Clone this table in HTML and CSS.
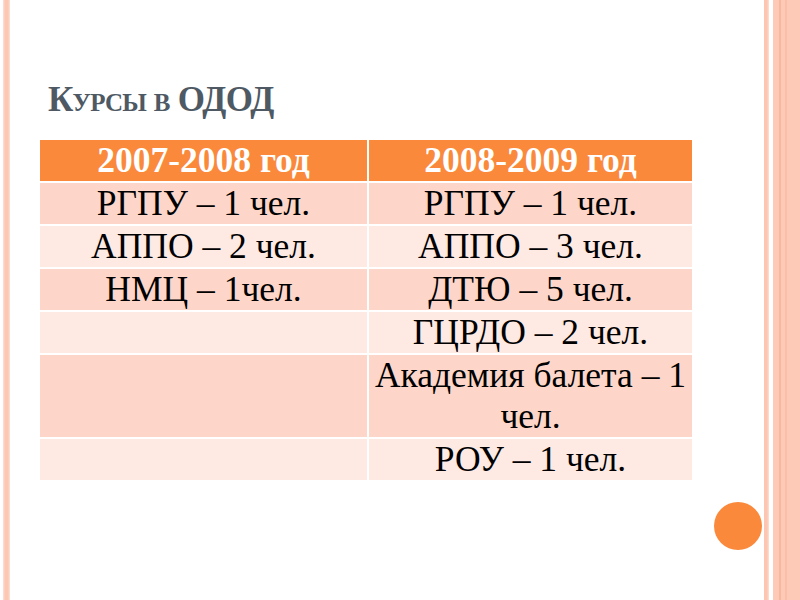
FILE: index.html
```html
<!DOCTYPE html>
<html lang="ru">
<head>
    <meta charset="UTF-8">
    <title>Курсы в ОДОД</title>
    <link rel="stylesheet" href="styles.css">
</head>
<body>
    <div class="frame-left"></div>
    <div class="slide">
        <h1 class="title">Курсы в ОДОД</h1>
        <table class="courses">
            <tr class="head">
                <th class="col-a">2007-2008 год</th>
                <th class="col-b">2008-2009 год</th>
            </tr>
            <tr class="dark">
                <td>РГПУ – 1 чел.</td>
                <td>РГПУ – 1 чел.</td>
            </tr>
            <tr class="light">
                <td>АППО – 2 чел.</td>
                <td>АППО – 3 чел.</td>
            </tr>
            <tr class="dark">
                <td>НМЦ – 1чел.</td>
                <td>ДТЮ – 5 чел.</td>
            </tr>
            <tr class="light">
                <td></td>
                <td>ГЦРДО – 2 чел.</td>
            </tr>
            <tr class="dark">
                <td></td>
                <td>Академия балета – 1 чел.</td>
            </tr>
            <tr class="light">
                <td></td>
                <td>РОУ – 1 чел.</td>
            </tr>
        </table>
        <div class="footer">
            <span class="dot"></span>
        </div>
    </div>
    <div class="frame-right">
        <div class="rule"></div>
        <div class="gap"></div>
        <div class="band"></div>
    </div>
</body>
</html>
```

FILE: styles.css
```css
body {
    margin: 0;
    width: 800px;
    height: 600px;
    display: flex;
    background-color: #fff;
    font-family: "Liberation Serif", "Times New Roman", serif;
    overflow: hidden;
}
.frame-left {
    width: 7px;
    margin-left: 3px;
    background: linear-gradient(to right, #fde3d8, #fcc7b3 30%, #fcc7b3 70%, #fde3d8);
}
.slide {
    flex: 1;
    display: flex;
    flex-direction: column;
}
.title {
    margin: 80px 0 0 38px;
    font-size: 35px;
    line-height: 40px;
    letter-spacing: -0.8px;
    font-weight: bold;
    font-variant: small-caps;
    color: #4e5964;
}
.courses {
    margin: 18px 0 0 28px;
    width: 656px;
    border-collapse: separate;
    border-spacing: 2px;
    font-size: 35.5px;
    line-height: 41px;
    color: #000;
}
.courses th,
.courses td {
    padding: 0 2px;
    text-align: center;
    vertical-align: middle;
    height: 41px;
}
.col-a {
    width: 323px;
}
.head th {
    background-color: #fa893c;
    color: #fff;
    font-weight: bold;
}
.dark td {
    background-color: #fdd6c9;
}
.light td {
    background-color: #fee9e3;
}
.footer {
    display: flex;
    justify-content: flex-end;
    margin-top: 20px;
    padding-right: 2px;
}
.dot {
    width: 48px;
    height: 48px;
    border-radius: 50%;
    background-color: #fa893c;
}
.frame-right {
    display: flex;
    width: 36px;
}
.rule {
    width: 5px;
    background: linear-gradient(to right, #fcc6b2, #fcc6b2 60%, #fde0d5);
}
.gap {
    width: 4px;
    background-color: #fff;
}
.band {
    flex: 1;
    background: linear-gradient(to right, #fdcab7 0, #fdcab7 6px, #f9b89e 6px, #f9b89e 8px, #fdcab7 8px, #fdcab7 12px, #fbbfa8 12px, #fbbfa8 14px, #fdcab7 14px);
}
```
